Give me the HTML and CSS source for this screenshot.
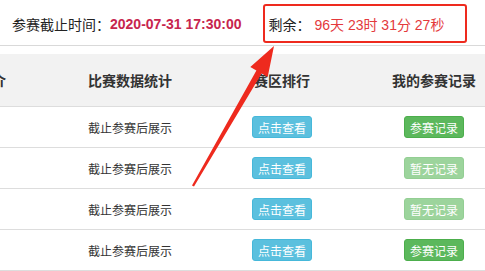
FILE: index.html
```html
<!DOCTYPE html>
<html lang="zh-CN">
<head>
<meta charset="utf-8">
<link rel="stylesheet" href="styles.css">
</head>
<body>
<div class="topbar">
  <span class="label">参赛截止时间：</span><span class="deadline">2020-07-31 17:30:00</span>
  <span class="countdown">剩余： <span class="remain">96天 23时 31分 27秒</span></span>
</div>
<div class="table">
  <div class="row head">
    <div class="cell">比赛简介</div>
    <div class="cell">比赛数据统计</div>
    <div class="cell">赛区排行</div>
    <div class="cell">我的参赛记录</div>
  </div>
  <div class="row">
    <div class="cell"></div>
    <div class="cell">截止参赛后展示</div>
    <div class="cell"><span class="btn info">点击查看</span></div>
    <div class="cell"><span class="btn success">参赛记录</span></div>
  </div>
  <div class="row">
    <div class="cell"></div>
    <div class="cell">截止参赛后展示</div>
    <div class="cell"><span class="btn info">点击查看</span></div>
    <div class="cell"><span class="btn success disabled">暂无记录</span></div>
  </div>
  <div class="row">
    <div class="cell"></div>
    <div class="cell">截止参赛后展示</div>
    <div class="cell"><span class="btn info">点击查看</span></div>
    <div class="cell"><span class="btn success disabled">暂无记录</span></div>
  </div>
  <div class="row">
    <div class="cell"></div>
    <div class="cell">截止参赛后展示</div>
    <div class="cell"><span class="btn info">点击查看</span></div>
    <div class="cell"><span class="btn success">参赛记录</span></div>
  </div>
</div>
<svg class="arrow" width="485" height="271" viewBox="0 0 485 271">
  <polygon points="274,46 267.7,77 261.6,73.5 194,186.6 192,185.4 256.4,70.5 250.3,67" fill="#ee2a1e"/>
</svg>
</body>
</html>
```
FILE: styles.css
```css
html, body {
  margin: 0;
  padding: 0;
  background: #fff;
  overflow: hidden;
  width: 485px;
  height: 271px;
}
body {
  font-family: "Liberation Sans", "Noto Sans CJK SC", sans-serif;
  color: #333;
  position: relative;
}
.topbar {
  height: 42px;
  padding-top: 3px;
  border-bottom: 1px solid #d9d9d9;
  display: flex;
  align-items: center;
  padding-left: 12px;
  font-size: 14px;
  white-space: nowrap;
}
.label { color: #222; }
.deadline {
  color: #c7254e;
  font-weight: bold;
}
.countdown {
  position: relative;
  margin-left: 27px;
  color: #222;
}
.countdown::after {
  content: "";
  position: absolute;
  left: -6px;
  right: -23px;
  top: -10px;
  bottom: -9px;
  border: 2.5px solid #ee2a1e;
  border-radius: 3px;
}
.remain { color: #e4393c; }
.table {
  margin-top: 8px;
  margin-left: -98px;
}
.row {
  display: grid;
  grid-template-columns: 152px 152px 152px 152px;
  height: 40px;
  border-bottom: 1px solid #dddddd;
  font-size: 12px;
}
.row.head {
  height: 52px;
  background: #f2f2f2;
  font-size: 14px;
  font-weight: bold;
}
.cell {
  display: flex;
  align-items: center;
  justify-content: center;
  white-space: nowrap;
}
.btn {
  display: inline-flex;
  align-items: center;
  justify-content: center;
  width: 60px;
  height: 22px;
  box-sizing: border-box;
  border-radius: 3px;
  color: #fff;
  font-size: 12px;
  font-weight: normal;
}
.info {
  background: #5bc0de;
  border: 1px solid #46b8da;
}
.success {
  background: #5cb85c;
  border: 1px solid #4cae4c;
}
.disabled { opacity: 0.6; }
.arrow {
  position: absolute;
  left: 0;
  top: 0;
  pointer-events: none;
}
```
